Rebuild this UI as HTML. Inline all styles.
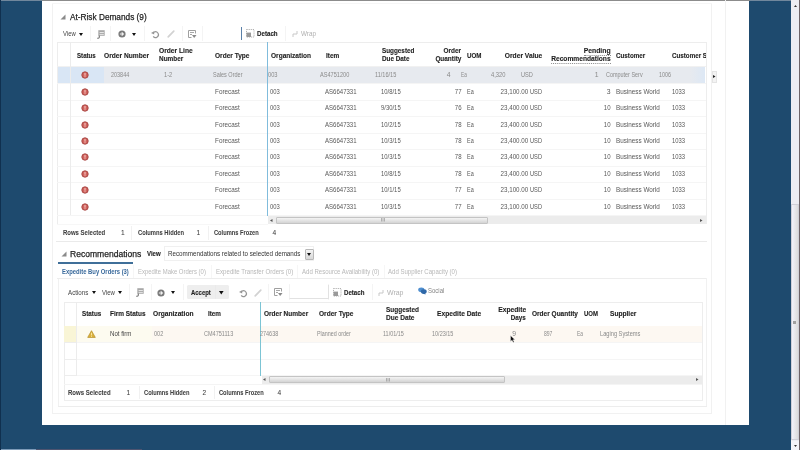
<!DOCTYPE html>
<html><head><meta charset="utf-8"><title>At-Risk Demands</title><style>
*{margin:0;padding:0;box-sizing:border-box}
html,body{width:800px;height:450px;overflow:hidden;background:#1e4a6e;font-family:"Liberation Sans",sans-serif}
.b{position:absolute}
.t{position:absolute;white-space:nowrap;line-height:10px;margin-top:-5px;transform-origin:0 50%}
.r{text-align:right;transform-origin:100% 50%}
.h{font-size:7px;font-weight:bold;color:#1e1e1e;-webkit-text-stroke:0.12px #1e1e1e}
.d{font-size:6.8px;color:#595959}
.ds{font-size:6.8px;color:#8a8a8a}
.sb{font-size:6.6px;font-weight:bold;color:#404040;-webkit-text-stroke:0.05px #404040}
.ti{font-size:9px;color:#1e1e1e;-webkit-text-stroke:0.25px #1e1e1e}
.tb{font-size:6.8px;color:#444}
.tbb{font-size:6.8px;font-weight:bold;color:#1e1e1e;-webkit-text-stroke:0.12px #1e1e1e}
.dis{font-size:6.8px;color:#b0b0b0}
svg{position:absolute;overflow:visible}
</style></head>
<body><div id="root" style="position:absolute;left:0;top:0;width:800px;height:450px;filter:blur(0.3px)">
<div class="b" style="left:42px;top:0px;width:707px;height:425px;background:#fff"></div>
<div class="b" style="left:0px;top:0px;width:800px;height:1px;background:#71879c"></div>
<div class="b" style="left:42px;top:0px;width:708px;height:1px;background:#8c8c8c"></div>
<div class="b" style="left:791px;top:0px;width:9px;height:450px;background:#ededf2"></div>
<div class="b" style="left:799px;top:0px;width:1px;height:450px;background:#6e6468"></div>
<div class="b" style="left:791px;top:204px;width:8px;height:236px;background:linear-gradient(90deg,#f2f2fa,#dcdcdc);border:1px solid #d0d0d8"></div>
<div class="b" style="left:793px;top:321px;width:3px;height:3px;background:#a0a0a0"></div>
<svg style="left:793.5px;top:4.5px" width="3" height="2"><polygon points="0,2 3,2 1.5,0" fill="#333"/></svg>
<div class="b" style="left:791px;top:441px;width:8px;height:9px;background:#f4f4f8"></div>
<svg style="left:793.5px;top:445px" width="3" height="2"><polygon points="0,0 3,0 1.5,2" fill="#333"/></svg>
<div class="b" style="left:0px;top:449px;width:36px;height:1px;background:#7e9bb8"></div>
<div class="b" style="left:36px;top:449px;width:106px;height:1px;background:#4e5470"></div>
<div class="b" style="left:52px;top:3px;width:1px;height:410px;background:#f1f1f1"></div>
<div class="b" style="left:0px;top:0px;width:1px;height:450px;background:#10304f"></div>
<div class="b" style="left:725px;top:0px;width:1px;height:425px;background:#f1f1f1"></div>
<div class="b" style="left:711px;top:3px;width:1px;height:410px;background:#f1f1f1"></div>
<div class="b" style="left:52px;top:3px;width:660px;height:1px;background:#f6f6f6"></div>
<div class="b" style="left:52px;top:413px;width:660px;height:1px;background:#f1f1f1"></div>
<svg style="left:60px;top:14px" width="6" height="6"><polygon points="5.5,0.5 5.5,5.5 0.5,5.5" fill="#8a8a8a"/></svg>
<div class="t ti" style="left:69.6px;top:17px;;transform:scaleX(0.918);">At-Risk Demands (9)</div>
<div class="t tb" style="left:62.9px;top:34px;;transform:scaleX(0.869);">View</div>
<svg style="left:78.9px;top:32.6px" width="4" height="3"><polygon points="0,0 4,0 2.0,3" fill="#111"/></svg>
<div class="b" style="left:90px;top:26px;width:1px;height:15px;background:#f4f4f4"></div>
<div class="b" style="left:110px;top:26px;width:1px;height:15px;background:#f4f4f4"></div>
<div class="b" style="left:144px;top:26px;width:1px;height:15px;background:#f4f4f4"></div>
<div class="b" style="left:181.5px;top:26px;width:1px;height:15px;background:#f4f4f4"></div>
<div class="b" style="left:202px;top:26px;width:1px;height:15px;background:#f4f4f4"></div>
<div class="b" style="left:284.5px;top:26px;width:1px;height:15px;background:#f4f4f4"></div>
<svg style="left:97px;top:29.6px" width="8" height="9"><rect x="1.3" y="0.2" width="6.4" height="5.6" fill="#a8a8a8"/><rect x="2.6" y="2" width="4.2" height="1" fill="#e6e6e6"/><rect x="2.6" y="3.9" width="4.2" height="1" fill="#e6e6e6"/><path d="M2.3 5.6V7.3Q2.3 8.2 1.2 8.2H0.2" stroke="#707070" stroke-width="1.1" fill="none"/></svg>
<svg style="left:117.6px;top:29.8px" width="8" height="8"><circle cx="4" cy="4" r="3.6" fill="#7a7a7a"/><path d="M1.9 4H5.4M3.7 2.3L5.4 4 3.7 5.7" stroke="#f2f2f2" stroke-width="1.1" fill="none"/></svg>
<svg style="left:132.2px;top:32.6px" width="4" height="3"><polygon points="0,0 4,0 2.0,3" fill="#111"/></svg>
<svg style="left:151.2px;top:30px" width="8" height="8"><path d="M2.9 2.2A2.9 2.9 0 1 1 2.2 6.4" stroke="#959595" stroke-width="1.15" fill="none"/><polygon points="0,3.1 3.2,1.2 3.2,4.6" fill="#959595"/></svg>
<svg style="left:166.5px;top:30px" width="8" height="8"><path d="M1.2 6.8L6.8 1.2" stroke="#d2d2d2" stroke-width="1.7" stroke-linecap="round"/></svg>
<svg style="left:187.5px;top:29.5px" width="9" height="9"><path d="M0.5 0.5h7v3M0.5 0.5v7h3" stroke="#a0a0a0" stroke-width="1" fill="none"/><path d="M2 2.5h4M2 4.5h2" stroke="#a8a8a8"/><path d="M4 5h4.5L6.2 8z" fill="#8a8a8a"/></svg>
<div class="b" style="left:240.6px;top:27.2px;width:1.4px;height:12.8px;background:#5a80a8"></div>
<svg style="left:246.2px;top:29.4px" width="8.5" height="8.5"><rect x="0.5" y="0.5" width="7.5" height="7.5" fill="none" stroke="#a8a8a8" stroke-width="0.9" stroke-dasharray="1.2 0.9"/><rect x="0.6" y="3.6" width="4.4" height="4.4" fill="#9a9a9a"/></svg>
<div class="t tbb" style="left:256.6px;top:34px;;transform:scaleX(0.909);">Detach</div>
<svg style="left:292px;top:30px" width="6" height="8"><path d="M1 7V4h4V1" stroke="#c8c8c8" stroke-width="1" fill="none"/></svg>
<div class="t dis" style="left:300.6px;top:34px;;transform:scaleX(0.930);">Wrap</div>
<div class="b" style="left:57px;top:42px;width:649px;height:1px;background:#ededed"></div>
<div class="b" style="left:57px;top:42px;width:1px;height:182px;background:#ededed"></div>
<div class="b" style="left:706px;top:42px;width:1px;height:182px;background:#ededed"></div>
<div class="b" style="left:57px;top:66px;width:649px;height:1px;background:#f1f1f1"></div>
<div class="b" style="left:58px;top:67px;width:47px;height:16.44px;background:#d9e6f5"></div>
<div class="b" style="left:104px;top:67px;width:601px;height:16.44px;background:#e7eaef"></div>
<div class="b" style="left:690px;top:67px;width:15px;height:16.44px;background:linear-gradient(90deg,#e7eaef,#dde8f5)"></div>
<div class="b" style="left:57px;top:83px;width:649px;height:1px;background:#f5f5f5"></div>
<div class="b" style="left:57px;top:100px;width:649px;height:1px;background:#f5f5f5"></div>
<div class="b" style="left:57px;top:116px;width:649px;height:1px;background:#f5f5f5"></div>
<div class="b" style="left:57px;top:133px;width:649px;height:1px;background:#f5f5f5"></div>
<div class="b" style="left:57px;top:149px;width:649px;height:1px;background:#f5f5f5"></div>
<div class="b" style="left:57px;top:166px;width:649px;height:1px;background:#f5f5f5"></div>
<div class="b" style="left:57px;top:182px;width:649px;height:1px;background:#f5f5f5"></div>
<div class="b" style="left:57px;top:199px;width:649px;height:1px;background:#f5f5f5"></div>
<div class="b" style="left:57px;top:215px;width:649px;height:1px;background:#f5f5f5"></div>
<div class="b" style="left:70px;top:42px;width:1px;height:173px;background:#ececec"></div>
<div class="b" style="left:266.6px;top:42px;width:1.2px;height:174px;background:#80bcdc"></div>
<div class="t h" style="left:77px;top:55.5px;;transform:scaleX(0.876);">Status</div>
<div class="t h" style="left:103.75px;top:55.5px;;transform:scaleX(0.948);">Order Number</div>
<div class="t h" style="left:158.75px;top:51.2px;;transform:scaleX(0.953);">Order Line</div>
<div class="t h" style="left:159.2px;top:58.9px;;transform:scaleX(0.915);">Number</div>
<div class="t h" style="left:215px;top:55.5px;;transform:scaleX(0.937);">Order Type</div>
<div class="t h" style="left:270.5px;top:55.5px;;transform:scaleX(0.935);">Organization</div>
<div class="t h" style="left:325.75px;top:55.5px;;transform:scaleX(0.920);">Item</div>
<div class="t h" style="left:381.6px;top:51.2px;;transform:scaleX(0.905);">Suggested</div>
<div class="t h" style="left:381.6px;top:58.9px;;transform:scaleX(0.906);">Due Date</div>
<div class="t h r" style="right:338.5px;top:51.2px;;transform:scaleX(0.918);">Order</div>
<div class="t h r" style="right:338.5px;top:58.9px;;transform:scaleX(0.916);">Quantity</div>
<div class="t h" style="left:466.75px;top:55.5px;;transform:scaleX(0.887);">UOM</div>
<div class="t h r" style="right:258px;top:55.5px;;transform:scaleX(0.954);">Order Value</div>
<div class="t h r" style="right:189.25px;top:52.25px;border-bottom:1px dotted #888;line-height:8px;transform:scaleX(0.977);">Pending</div>
<div class="t h r" style="right:189.25px;top:59.75px;border-bottom:1px dotted #888;line-height:8px;transform:scaleX(0.950);">Recommendations</div>
<div class="t h" style="left:615.7px;top:55.5px;;transform:scaleX(0.896);">Customer</div>
<div class="b" style="left:671.7px;top:50.5px;width:34px;height:10px;overflow:hidden"><div class="t h" style="left:0;top:5px;transform:scaleX(0.89)">Customer Site</div></div>
<svg style="left:81.3px;top:71.22px" width="8" height="8"><circle cx="4" cy="4" r="3.2" fill="#cf625d" stroke="#a54340" stroke-width="0.9"/><rect x="3.5" y="1.9" width="1" height="2.8" fill="#fbd0cc"/><rect x="3.5" y="5.3" width="1" height="0.9" fill="#fbd0cc"/></svg>
<div class="t ds" style="left:110.5px;top:75.22px;;transform:scaleX(0.804);">203844</div>
<div class="t ds" style="left:163.75px;top:75.22px;;transform:scaleX(0.839);">1-2</div>
<div class="t ds" style="left:212.5px;top:75.22px;;transform:scaleX(0.813);">Sales Order</div>
<div class="t ds" style="left:267.5px;top:75.22px;;transform:scaleX(0.837);">003</div>
<div class="t ds" style="left:320px;top:75.22px;;transform:scaleX(0.823);">AS4751200</div>
<div class="t ds" style="left:375px;top:75.22px;;transform:scaleX(0.819);">11/16/15</div>
<div class="t ds r" style="right:349.5px;top:75.22px;;">4</div>
<div class="t ds" style="left:461.25px;top:75.22px;;transform:scaleX(0.690);">Ea</div>
<div class="t ds" style="left:491.25px;top:75.22px;;transform:scaleX(0.852);">4,320</div>
<div class="t ds" style="left:520.6px;top:75.22px;;transform:scaleX(0.829);">USD</div>
<div class="t ds r" style="right:201.5px;top:75.22px;;">1</div>
<div class="t ds" style="left:605.9px;top:75.22px;;transform:scaleX(0.801);">Computer Serv</div>
<div class="t ds" style="left:659px;top:75.22px;;transform:scaleX(0.793);">1006</div>
<svg style="left:81.3px;top:87.66px" width="8" height="8"><circle cx="4" cy="4" r="3.2" fill="#cf625d" stroke="#a54340" stroke-width="0.9"/><rect x="3.5" y="1.9" width="1" height="2.8" fill="#fbd0cc"/><rect x="3.5" y="5.3" width="1" height="0.9" fill="#fbd0cc"/></svg>
<div class="t d" style="left:214.5px;top:91.66px;;transform:scaleX(0.936);">Forecast</div>
<div class="t d" style="left:270.25px;top:91.66px;;transform:scaleX(0.860);">003</div>
<div class="t d" style="left:325.4px;top:91.66px;;transform:scaleX(0.889);">AS6647331</div>
<div class="t d" style="left:381.3px;top:91.66px;;transform:scaleX(0.868);">10/8/15</div>
<div class="t d r" style="right:338.7px;top:91.66px;;transform:scaleX(0.893);">77</div>
<div class="t d" style="left:467px;top:91.66px;;transform:scaleX(0.805);">Ea</div>
<div class="t d r" style="right:272px;top:91.66px;;transform:scaleX(0.916);">23,100.00</div>
<div class="t d" style="left:530px;top:91.66px;;transform:scaleX(0.836);">USD</div>
<div class="t d r" style="right:189.5px;top:91.66px;;">3</div>
<div class="t d" style="left:615.8px;top:91.66px;;transform:scaleX(0.932);">Business World</div>
<div class="t d" style="left:671.7px;top:91.66px;;transform:scaleX(0.860);">1033</div>
<svg style="left:81.3px;top:104.1px" width="8" height="8"><circle cx="4" cy="4" r="3.2" fill="#cf625d" stroke="#a54340" stroke-width="0.9"/><rect x="3.5" y="1.9" width="1" height="2.8" fill="#fbd0cc"/><rect x="3.5" y="5.3" width="1" height="0.9" fill="#fbd0cc"/></svg>
<div class="t d" style="left:214.5px;top:108.1px;;transform:scaleX(0.936);">Forecast</div>
<div class="t d" style="left:270.25px;top:108.1px;;transform:scaleX(0.860);">003</div>
<div class="t d" style="left:325.4px;top:108.1px;;transform:scaleX(0.889);">AS6647331</div>
<div class="t d" style="left:381.3px;top:108.1px;;transform:scaleX(0.868);">9/30/15</div>
<div class="t d r" style="right:338.7px;top:108.1px;;transform:scaleX(0.893);">76</div>
<div class="t d" style="left:467px;top:108.1px;;transform:scaleX(0.805);">Ea</div>
<div class="t d r" style="right:272px;top:108.1px;;transform:scaleX(0.916);">23,400.00</div>
<div class="t d" style="left:530px;top:108.1px;;transform:scaleX(0.836);">USD</div>
<div class="t d r" style="right:189.5px;top:108.1px;;transform:scaleX(0.893);">10</div>
<div class="t d" style="left:615.8px;top:108.1px;;transform:scaleX(0.932);">Business World</div>
<div class="t d" style="left:671.7px;top:108.1px;;transform:scaleX(0.860);">1033</div>
<svg style="left:81.3px;top:120.54px" width="8" height="8"><circle cx="4" cy="4" r="3.2" fill="#cf625d" stroke="#a54340" stroke-width="0.9"/><rect x="3.5" y="1.9" width="1" height="2.8" fill="#fbd0cc"/><rect x="3.5" y="5.3" width="1" height="0.9" fill="#fbd0cc"/></svg>
<div class="t d" style="left:214.5px;top:124.54px;;transform:scaleX(0.936);">Forecast</div>
<div class="t d" style="left:270.25px;top:124.54px;;transform:scaleX(0.860);">003</div>
<div class="t d" style="left:325.4px;top:124.54px;;transform:scaleX(0.889);">AS6647331</div>
<div class="t d" style="left:381.3px;top:124.54px;;transform:scaleX(0.868);">10/2/15</div>
<div class="t d r" style="right:338.7px;top:124.54px;;transform:scaleX(0.893);">78</div>
<div class="t d" style="left:467px;top:124.54px;;transform:scaleX(0.805);">Ea</div>
<div class="t d r" style="right:272px;top:124.54px;;transform:scaleX(0.916);">23,400.00</div>
<div class="t d" style="left:530px;top:124.54px;;transform:scaleX(0.836);">USD</div>
<div class="t d r" style="right:189.5px;top:124.54px;;transform:scaleX(0.893);">10</div>
<div class="t d" style="left:615.8px;top:124.54px;;transform:scaleX(0.932);">Business World</div>
<div class="t d" style="left:671.7px;top:124.54px;;transform:scaleX(0.860);">1033</div>
<svg style="left:81.3px;top:136.98px" width="8" height="8"><circle cx="4" cy="4" r="3.2" fill="#cf625d" stroke="#a54340" stroke-width="0.9"/><rect x="3.5" y="1.9" width="1" height="2.8" fill="#fbd0cc"/><rect x="3.5" y="5.3" width="1" height="0.9" fill="#fbd0cc"/></svg>
<div class="t d" style="left:214.5px;top:140.98px;;transform:scaleX(0.936);">Forecast</div>
<div class="t d" style="left:270.25px;top:140.98px;;transform:scaleX(0.860);">003</div>
<div class="t d" style="left:325.4px;top:140.98px;;transform:scaleX(0.889);">AS6647331</div>
<div class="t d" style="left:381.3px;top:140.98px;;transform:scaleX(0.868);">10/3/15</div>
<div class="t d r" style="right:338.7px;top:140.98px;;transform:scaleX(0.893);">78</div>
<div class="t d" style="left:467px;top:140.98px;;transform:scaleX(0.805);">Ea</div>
<div class="t d r" style="right:272px;top:140.98px;;transform:scaleX(0.916);">23,400.00</div>
<div class="t d" style="left:530px;top:140.98px;;transform:scaleX(0.836);">USD</div>
<div class="t d r" style="right:189.5px;top:140.98px;;transform:scaleX(0.893);">10</div>
<div class="t d" style="left:615.8px;top:140.98px;;transform:scaleX(0.932);">Business World</div>
<div class="t d" style="left:671.7px;top:140.98px;;transform:scaleX(0.860);">1033</div>
<svg style="left:81.3px;top:153.42px" width="8" height="8"><circle cx="4" cy="4" r="3.2" fill="#cf625d" stroke="#a54340" stroke-width="0.9"/><rect x="3.5" y="1.9" width="1" height="2.8" fill="#fbd0cc"/><rect x="3.5" y="5.3" width="1" height="0.9" fill="#fbd0cc"/></svg>
<div class="t d" style="left:214.5px;top:157.42px;;transform:scaleX(0.936);">Forecast</div>
<div class="t d" style="left:270.25px;top:157.42px;;transform:scaleX(0.860);">003</div>
<div class="t d" style="left:325.4px;top:157.42px;;transform:scaleX(0.889);">AS6647331</div>
<div class="t d" style="left:381.3px;top:157.42px;;transform:scaleX(0.868);">10/3/15</div>
<div class="t d r" style="right:338.7px;top:157.42px;;transform:scaleX(0.893);">78</div>
<div class="t d" style="left:467px;top:157.42px;;transform:scaleX(0.805);">Ea</div>
<div class="t d r" style="right:272px;top:157.42px;;transform:scaleX(0.916);">23,400.00</div>
<div class="t d" style="left:530px;top:157.42px;;transform:scaleX(0.836);">USD</div>
<div class="t d r" style="right:189.5px;top:157.42px;;transform:scaleX(0.893);">10</div>
<div class="t d" style="left:615.8px;top:157.42px;;transform:scaleX(0.932);">Business World</div>
<div class="t d" style="left:671.7px;top:157.42px;;transform:scaleX(0.860);">1033</div>
<svg style="left:81.3px;top:169.86px" width="8" height="8"><circle cx="4" cy="4" r="3.2" fill="#cf625d" stroke="#a54340" stroke-width="0.9"/><rect x="3.5" y="1.9" width="1" height="2.8" fill="#fbd0cc"/><rect x="3.5" y="5.3" width="1" height="0.9" fill="#fbd0cc"/></svg>
<div class="t d" style="left:214.5px;top:173.86px;;transform:scaleX(0.936);">Forecast</div>
<div class="t d" style="left:270.25px;top:173.86px;;transform:scaleX(0.860);">003</div>
<div class="t d" style="left:325.4px;top:173.86px;;transform:scaleX(0.889);">AS6647331</div>
<div class="t d" style="left:381.3px;top:173.86px;;transform:scaleX(0.868);">10/8/15</div>
<div class="t d r" style="right:338.7px;top:173.86px;;transform:scaleX(0.893);">78</div>
<div class="t d" style="left:467px;top:173.86px;;transform:scaleX(0.805);">Ea</div>
<div class="t d r" style="right:272px;top:173.86px;;transform:scaleX(0.916);">23,400.00</div>
<div class="t d" style="left:530px;top:173.86px;;transform:scaleX(0.836);">USD</div>
<div class="t d r" style="right:189.5px;top:173.86px;;transform:scaleX(0.893);">10</div>
<div class="t d" style="left:615.8px;top:173.86px;;transform:scaleX(0.932);">Business World</div>
<div class="t d" style="left:671.7px;top:173.86px;;transform:scaleX(0.860);">1033</div>
<svg style="left:81.3px;top:186.3px" width="8" height="8"><circle cx="4" cy="4" r="3.2" fill="#cf625d" stroke="#a54340" stroke-width="0.9"/><rect x="3.5" y="1.9" width="1" height="2.8" fill="#fbd0cc"/><rect x="3.5" y="5.3" width="1" height="0.9" fill="#fbd0cc"/></svg>
<div class="t d" style="left:214.5px;top:190.3px;;transform:scaleX(0.936);">Forecast</div>
<div class="t d" style="left:270.25px;top:190.3px;;transform:scaleX(0.860);">003</div>
<div class="t d" style="left:325.4px;top:190.3px;;transform:scaleX(0.889);">AS6647331</div>
<div class="t d" style="left:381.3px;top:190.3px;;transform:scaleX(0.868);">10/1/15</div>
<div class="t d r" style="right:338.7px;top:190.3px;;transform:scaleX(0.893);">77</div>
<div class="t d" style="left:467px;top:190.3px;;transform:scaleX(0.805);">Ea</div>
<div class="t d r" style="right:272px;top:190.3px;;transform:scaleX(0.916);">23,100.00</div>
<div class="t d" style="left:530px;top:190.3px;;transform:scaleX(0.836);">USD</div>
<div class="t d r" style="right:189.5px;top:190.3px;;transform:scaleX(0.893);">10</div>
<div class="t d" style="left:615.8px;top:190.3px;;transform:scaleX(0.932);">Business World</div>
<div class="t d" style="left:671.7px;top:190.3px;;transform:scaleX(0.860);">1033</div>
<svg style="left:81.3px;top:202.74px" width="8" height="8"><circle cx="4" cy="4" r="3.2" fill="#cf625d" stroke="#a54340" stroke-width="0.9"/><rect x="3.5" y="1.9" width="1" height="2.8" fill="#fbd0cc"/><rect x="3.5" y="5.3" width="1" height="0.9" fill="#fbd0cc"/></svg>
<div class="t d" style="left:214.5px;top:206.74px;;transform:scaleX(0.936);">Forecast</div>
<div class="t d" style="left:270.25px;top:206.74px;;transform:scaleX(0.860);">003</div>
<div class="t d" style="left:325.4px;top:206.74px;;transform:scaleX(0.889);">AS6647331</div>
<div class="t d" style="left:381.3px;top:206.74px;;transform:scaleX(0.868);">10/3/15</div>
<div class="t d r" style="right:338.7px;top:206.74px;;transform:scaleX(0.893);">77</div>
<div class="t d" style="left:467px;top:206.74px;;transform:scaleX(0.805);">Ea</div>
<div class="t d r" style="right:272px;top:206.74px;;transform:scaleX(0.916);">23,100.00</div>
<div class="t d" style="left:530px;top:206.74px;;transform:scaleX(0.836);">USD</div>
<div class="t d r" style="right:189.5px;top:206.74px;;transform:scaleX(0.893);">10</div>
<div class="t d" style="left:615.8px;top:206.74px;;transform:scaleX(0.932);">Business World</div>
<div class="t d" style="left:671.7px;top:206.74px;;transform:scaleX(0.860);">1033</div>
<div class="b" style="left:711.8px;top:71px;width:5.5px;height:11.5px;background:#f3f3f3;border:1px solid #e4e4e4"></div>
<svg style="left:713.3px;top:75.2px" width="2.5" height="3"><polygon points="0,0 0,3 2.5,1.5" fill="#222"/></svg>
<div class="b" style="left:268px;top:216px;width:438px;height:8px;background:#ececec"></div>
<div class="b" style="left:276px;top:216.5px;width:212px;height:7px;background:linear-gradient(#f4f4f4,#d4d4d4);border:1px solid #c4c4c4;border-radius:1px"></div>
<svg style="left:270.3px;top:218.5px" width="2.5" height="3"><polygon points="2.5,0 2.5,3 0,1.5" fill="#555"/></svg>
<svg style="left:700.3px;top:218.5px" width="2.5" height="3"><polygon points="0,0 0,3 2.5,1.5" fill="#555"/></svg>
<svg style="left:381px;top:218.3px" width="4" height="3.5"><path d="M0.5 0v3.5M2 0v3.5M3.5 0v3.5" stroke="#8a8a8a" stroke-width="0.6"/></svg>
<div class="b" style="left:57px;top:224px;width:211px;height:1px;background:#f7f7f7"></div>
<div class="t sb" style="left:62.8px;top:232.5px;;transform:scaleX(0.907);">Rows Selected</div>
<div class="t sb" style="left:121px;top:232.5px;font-weight:normal;">1</div>
<div class="b" style="left:131px;top:226px;width:1px;height:14px;background:#f1f1f1"></div>
<div class="t sb" style="left:138px;top:232.5px;;transform:scaleX(0.878);">Columns Hidden</div>
<div class="t sb" style="left:196.5px;top:232.5px;font-weight:normal;">1</div>
<div class="b" style="left:207.5px;top:226px;width:1px;height:14px;background:#f1f1f1"></div>
<div class="t sb" style="left:213.75px;top:232.5px;;transform:scaleX(0.866);">Columns Frozen</div>
<div class="t sb" style="left:272.5px;top:232.5px;font-weight:normal;">4</div>
<div class="b" style="left:56px;top:241px;width:651px;height:1px;background:#eaeaea"></div>
<svg style="left:61px;top:251px" width="6" height="6"><polygon points="5.5,0.5 5.5,5.5 0.5,5.5" fill="#8a8a8a"/></svg>
<div class="t ti" style="left:69.7px;top:253.5px;;transform:scaleX(0.950);">Recommendations</div>
<div class="t tbb" style="left:147px;top:253.6px;;transform:scaleX(0.891);">View</div>
<div class="b" style="left:164px;top:246px;width:150px;height:15px;border:1px solid #f0f0f0;background:#fff"></div>
<div class="t tb" style="left:168px;top:253.5px;color:#333;transform:scaleX(0.920);">Recommendations related to selected demands</div>
<div class="b" style="left:304.5px;top:248.5px;width:9px;height:11px;background:linear-gradient(#f4f4f4,#d8d8d8);border:1px solid #b8b8b8;border-radius:1px"></div>
<svg style="left:307px;top:252.7px" width="4" height="3"><polygon points="0,0 4,0 2.0,3" fill="#111"/></svg>
<div class="b" style="left:57.5px;top:262px;width:75.5px;height:2px;background:#3f6f99"></div>
<div class="t tbb" style="left:61.6px;top:271.8px;color:#3a6a9c;-webkit-text-stroke:0;transform:scaleX(0.863);">Expedite Buy Orders (3)</div>
<div class="b" style="left:132.5px;top:265px;width:1px;height:13px;background:#f6f6f6"></div>
<div class="t dis" style="left:137.8px;top:271.8px;color:#b8b8b8;transform:scaleX(0.872);">Expedite Make Orders (0)</div>
<div class="b" style="left:211px;top:265px;width:1px;height:13px;background:#f6f6f6"></div>
<div class="t dis" style="left:215.7px;top:271.8px;color:#b8b8b8;transform:scaleX(0.897);">Expedite Transfer Orders (0)</div>
<div class="b" style="left:297px;top:265px;width:1px;height:13px;background:#f6f6f6"></div>
<div class="t dis" style="left:301.7px;top:271.8px;color:#b8b8b8;transform:scaleX(0.891);">Add Resource Availability (0)</div>
<div class="b" style="left:384px;top:265px;width:1px;height:13px;background:#f6f6f6"></div>
<div class="t dis" style="left:388px;top:271.8px;color:#b8b8b8;transform:scaleX(0.891);">Add Supplier Capacity (0)</div>
<div class="b" style="left:57px;top:278px;width:650px;height:1px;background:#ededed"></div>
<div class="b" style="left:58px;top:279px;width:1px;height:127px;background:#f1f1f1"></div>
<div class="b" style="left:706px;top:278px;width:1px;height:128px;background:#f1f1f1"></div>
<div class="b" style="left:58px;top:406px;width:649px;height:1px;background:#ededed"></div>
<div class="t tb" style="left:68px;top:293px;;transform:scaleX(0.910);">Actions</div>
<svg style="left:91.6px;top:291.1px" width="4" height="3"><polygon points="0,0 4,0 2.0,3" fill="#111"/></svg>
<div class="t tb" style="left:101.8px;top:293px;;transform:scaleX(0.883);">View</div>
<svg style="left:117.8px;top:291.1px" width="4" height="3"><polygon points="0,0 4,0 2.0,3" fill="#111"/></svg>
<div class="b" style="left:129.3px;top:284px;width:1px;height:16px;background:#f4f4f4"></div>
<div class="b" style="left:150.7px;top:284px;width:1px;height:16px;background:#f4f4f4"></div>
<div class="b" style="left:183px;top:284px;width:1px;height:16px;background:#f4f4f4"></div>
<div class="b" style="left:268px;top:284px;width:1px;height:16px;background:#f4f4f4"></div>
<div class="b" style="left:289px;top:284px;width:1px;height:16px;background:#f4f4f4"></div>
<div class="b" style="left:328px;top:284px;width:1px;height:16px;background:#f4f4f4"></div>
<div class="b" style="left:371.5px;top:284px;width:1px;height:16px;background:#f4f4f4"></div>
<svg style="left:135.5px;top:288px" width="8" height="9"><rect x="1.3" y="0.2" width="6.4" height="5.6" fill="#a8a8a8"/><rect x="2.6" y="2" width="4.2" height="1" fill="#e6e6e6"/><rect x="2.6" y="3.9" width="4.2" height="1" fill="#e6e6e6"/><path d="M2.3 5.6V7.3Q2.3 8.2 1.2 8.2H0.2" stroke="#707070" stroke-width="1.1" fill="none"/></svg>
<svg style="left:156.5px;top:288.5px" width="8" height="8"><circle cx="4" cy="4" r="3.6" fill="#7a7a7a"/><path d="M1.9 4H5.4M3.7 2.3L5.4 4 3.7 5.7" stroke="#f2f2f2" stroke-width="1.1" fill="none"/></svg>
<svg style="left:171.1px;top:291.1px" width="4" height="3"><polygon points="0,0 4,0 2.0,3" fill="#111"/></svg>
<div class="b" style="left:186.5px;top:285px;width:42px;height:14.4px;background:#eeeeee;border-radius:1.5px"></div>
<div class="t tbb" style="left:191px;top:292.8px;;transform:scaleX(0.873);">Accept</div>
<div class="b" style="left:215.3px;top:285px;width:1px;height:14px;background:#eaeaea"></div>
<svg style="left:219.4px;top:290.9px" width="4.6" height="3.4"><polygon points="0,0 4.6,0 2.3,3.4" fill="#111"/></svg>
<svg style="left:239px;top:288.5px" width="8" height="8"><path d="M2.9 2.2A2.9 2.9 0 1 1 2.2 6.4" stroke="#959595" stroke-width="1.15" fill="none"/><polygon points="0,3.1 3.2,1.2 3.2,4.6" fill="#959595"/></svg>
<svg style="left:254px;top:288.5px" width="8" height="8"><path d="M1.2 6.8L6.8 1.2" stroke="#d2d2d2" stroke-width="1.7" stroke-linecap="round"/></svg>
<svg style="left:274px;top:288px" width="9" height="9"><path d="M0.5 0.5h7v3M0.5 0.5v7h3" stroke="#a0a0a0" stroke-width="1" fill="none"/><path d="M2 2.5h4M2 4.5h2" stroke="#a8a8a8"/><path d="M4 5h4.5L6.2 8z" fill="#8a8a8a"/></svg>
<svg style="left:332.5px;top:288px" width="8.5" height="8.5"><rect x="0.5" y="0.5" width="7.5" height="7.5" fill="none" stroke="#a8a8a8" stroke-width="0.9" stroke-dasharray="1.2 0.9"/><rect x="0.6" y="3.6" width="4.4" height="4.4" fill="#9a9a9a"/></svg>
<div class="b" style="left:288.7px;top:284.7px;width:40px;height:14.3px;border-right:1px solid #e2e2e2;border-bottom:1px solid #e2e2e2;border-left:1px solid #f2f2f2"></div>
<div class="t tbb" style="left:343.6px;top:292.8px;;transform:scaleX(0.900);">Detach</div>
<svg style="left:378px;top:288.5px" width="6" height="8"><path d="M1 7V4h4V1" stroke="#c8c8c8" stroke-width="1" fill="none"/></svg>
<div class="t dis" style="left:386.5px;top:293px;;transform:scaleX(1.023);">Wrap</div>
<svg style="left:417.6px;top:286.5px" width="9" height="8"><ellipse cx="3.3" cy="2.8" rx="3.1" ry="2.4" fill="#4f8fd0"/><ellipse cx="5.8" cy="4.6" rx="2.9" ry="2.3" fill="#2f68a8"/><path d="M5.5 6.5L7.5 7.8L6.8 5.8z" fill="#2f68a8"/></svg>
<div class="t tb" style="left:427.9px;top:290.7px;color:#858585;transform:scaleX(0.880);">Social</div>
<div class="b" style="left:63.5px;top:301.5px;width:638.0px;height:1px;background:#ededed"></div>
<div class="b" style="left:63.5px;top:301.5px;width:1px;height:98.5px;background:#ededed"></div>
<div class="b" style="left:701.5px;top:301.5px;width:1px;height:98.5px;background:#ededed"></div>
<div class="b" style="left:63.5px;top:325.5px;width:638.0px;height:1px;background:#f2f2f2"></div>
<div class="b" style="left:64.0px;top:326.0px;width:12.5px;height:16.6px;background:#f9f5d6"></div>
<div class="b" style="left:76.5px;top:326.0px;width:75px;height:16.6px;background:#fdfbf0"></div>
<div class="b" style="left:151.5px;top:326.0px;width:550px;height:16.6px;background:#fdf8f2"></div>
<div class="b" style="left:63.5px;top:342px;width:638.0px;height:1px;background:#f5f5f5"></div>
<div class="b" style="left:63.5px;top:342px;width:12.5px;height:1px;background:#ededed"></div>
<div class="b" style="left:63.5px;top:359px;width:638.0px;height:1px;background:#f5f5f5"></div>
<div class="b" style="left:63.5px;top:359px;width:12.5px;height:1px;background:#ededed"></div>
<div class="b" style="left:63.5px;top:375px;width:638.0px;height:1px;background:#f5f5f5"></div>
<div class="b" style="left:63.5px;top:375px;width:12.5px;height:1px;background:#ededed"></div>
<div class="b" style="left:76px;top:301.5px;width:1px;height:74.0px;background:#ececec"></div>
<div class="b" style="left:260px;top:301.5px;width:1.2px;height:74.0px;background:#7cc4d4"></div>
<div class="t h" style="left:82px;top:313.5px;;transform:scaleX(0.899);">Status</div>
<div class="t h" style="left:109.5px;top:313.5px;;transform:scaleX(0.922);">Firm Status</div>
<div class="t h" style="left:152.5px;top:313.5px;;transform:scaleX(0.947);">Organization</div>
<div class="t h" style="left:208px;top:313.5px;;transform:scaleX(0.902);">Item</div>
<div class="t h" style="left:263.75px;top:313.5px;;transform:scaleX(0.932);">Order Number</div>
<div class="t h" style="left:318.75px;top:313.5px;;transform:scaleX(0.937);">Order Type</div>
<div class="t h" style="left:385.75px;top:310px;;transform:scaleX(0.922);">Suggested</div>
<div class="t h" style="left:385.75px;top:318.2px;;transform:scaleX(0.939);">Due Date</div>
<div class="t h" style="left:436.9px;top:313.5px;;transform:scaleX(0.955);">Expedite Date</div>
<div class="t h r" style="right:274px;top:310px;;transform:scaleX(0.959);">Expedite</div>
<div class="t h r" style="right:274px;top:318px;;transform:scaleX(0.896);">Days</div>
<div class="t h" style="left:532px;top:313.5px;;transform:scaleX(0.931);">Order Quantity</div>
<div class="t h" style="left:584px;top:313.5px;;transform:scaleX(0.857);">UOM</div>
<div class="t h" style="left:609.6px;top:313.5px;;transform:scaleX(0.942);">Supplier</div>
<svg style="left:86.5px;top:330.3px" width="9" height="8"><path d="M4.5 0.7L8.3 7.4H0.7z" fill="#dcb23e" stroke="#b58c22" stroke-width="0.7" stroke-linejoin="round"/><rect x="4" y="2.8" width="1" height="2.6" fill="#f6e3a0"/><rect x="4" y="5.9" width="1" height="0.9" fill="#f6e3a0"/></svg>
<div class="t d" style="left:109.5px;top:334.3px;color:#444;transform:scaleX(0.893);">Not firm</div>
<div class="t ds" style="left:153.75px;top:334.3px;;transform:scaleX(0.815);">002</div>
<div class="t ds" style="left:203.75px;top:334.3px;;transform:scaleX(0.812);">CM4751113</div>
<div class="t ds" style="left:260px;top:334.3px;;transform:scaleX(0.804);">274638</div>
<div class="t ds" style="left:316.75px;top:334.3px;;transform:scaleX(0.790);">Planned order</div>
<div class="t ds" style="left:383px;top:334.3px;;transform:scaleX(0.800);">11/01/15</div>
<div class="t ds" style="left:432.4px;top:334.3px;;transform:scaleX(0.807);">10/23/15</div>
<div class="t ds r" style="right:284px;top:334.3px;;">9</div>
<div class="t ds" style="left:543.6px;top:334.3px;;transform:scaleX(0.740);">897</div>
<div class="t ds" style="left:577px;top:334.3px;;transform:scaleX(0.720);">Ea</div>
<div class="t ds" style="left:600px;top:334.3px;;transform:scaleX(0.835);">Laging Systems</div>
<svg style="left:509.5px;top:334.5px" width="6" height="8"><path d="M0.5 0.5L0.5 6.5L2 5.2L3.2 7.6L4.2 7.1L3 4.8L5 4.8z" fill="#111" stroke="#fff" stroke-width="0.4"/></svg>
<div class="b" style="left:262px;top:375.5px;width:439.5px;height:8.3px;background:#ececec"></div>
<div class="b" style="left:268.75px;top:376px;width:236px;height:7.3px;background:linear-gradient(#f4f4f4,#d4d4d4);border:1px solid #c4c4c4;border-radius:1px"></div>
<svg style="left:263.3px;top:378.2px" width="2.5" height="3"><polygon points="2.5,0 2.5,3 0,1.5" fill="#555"/></svg>
<svg style="left:695.8px;top:378.2px" width="2.5" height="3"><polygon points="0,0 0,3 2.5,1.5" fill="#555"/></svg>
<svg style="left:386px;top:377.9px" width="4" height="3.5"><path d="M0.5 0v3.5M2 0v3.5M3.5 0v3.5" stroke="#8a8a8a" stroke-width="0.6"/></svg>
<div class="b" style="left:63.5px;top:384px;width:638.0px;height:1px;background:#f4f4f4"></div>
<div class="t sb" style="left:68px;top:392.6px;;transform:scaleX(0.915);">Rows Selected</div>
<div class="t sb" style="left:126.5px;top:392.6px;font-weight:normal;">1</div>
<div class="b" style="left:138.75px;top:386px;width:1px;height:13px;background:#f1f1f1"></div>
<div class="t sb" style="left:144px;top:392.6px;;transform:scaleX(0.867);">Columns Hidden</div>
<div class="t sb" style="left:202.4px;top:392.6px;font-weight:normal;">2</div>
<div class="b" style="left:214.4px;top:386px;width:1px;height:13px;background:#f1f1f1"></div>
<div class="t sb" style="left:219px;top:392.6px;;transform:scaleX(0.866);">Columns Frozen</div>
<div class="t sb" style="left:277.4px;top:392.6px;font-weight:normal;">4</div>
<div class="b" style="left:63.5px;top:400px;width:639.0px;height:1px;background:#eeeeee"></div>
</div></body></html>
